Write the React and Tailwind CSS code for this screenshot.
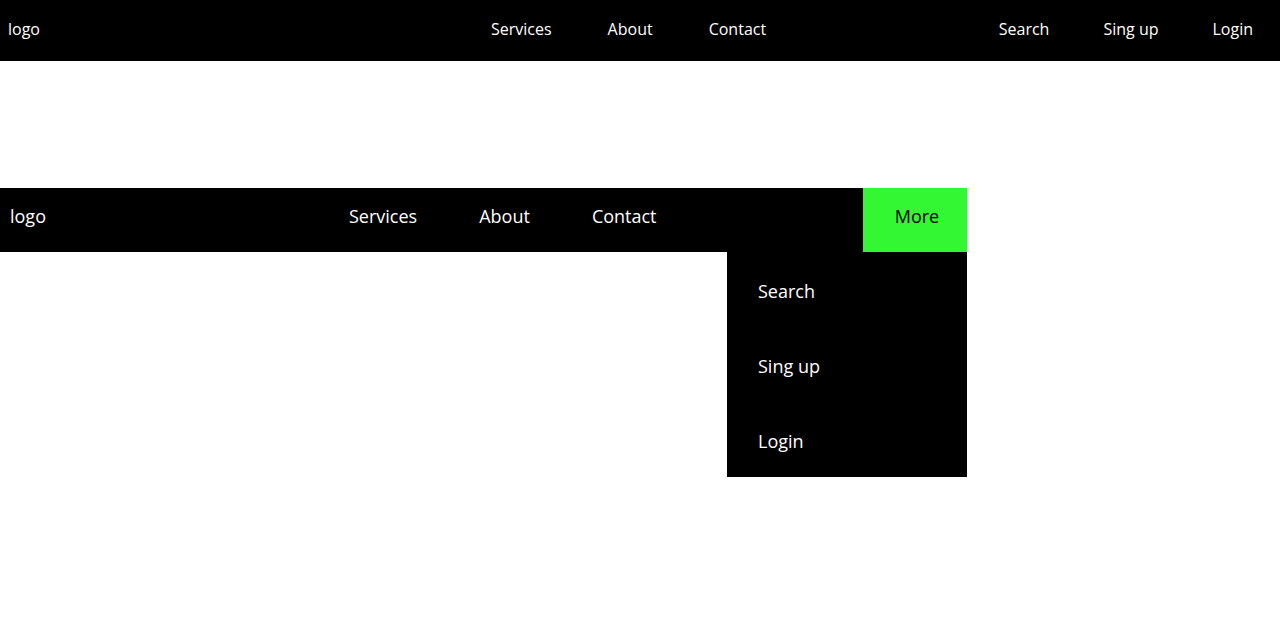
const topLinks = ['Services', 'About', 'Contact'];
const userLinks = ['Search', 'Sing up', 'Login'];

const App = () => {
  return (
    <div className="h-[640px] w-[1280px] bg-white font-['Open_Sans',sans-serif]">
      {/* wide navbar */}
      <header className="flex h-[61px] items-center bg-black pb-[4px] text-[16px] text-white">
        <a className="w-[463px] pl-2">logo</a>
        <nav className="flex">
          {topLinks.map(link => (
            <a key={link} className="px-[28px]">{link}</a>
          ))}
        </nav>
        <nav className="ml-auto flex">
          {userLinks.map(link => (
            <a key={link} className="px-[27px]">{link}</a>
          ))}
        </nav>
      </header>

      {/* collapsed navbar with dropdown */}
      <div className="relative mt-[127px] w-[967px]">
        <div className="flex h-16 items-center bg-black text-[18px] text-white">
          <a className="w-[318px] pb-2 pl-[10px]">logo</a>
          <nav className="flex pb-2">
            {topLinks.map(link => (
              <a key={link} className="px-[31px]">{link}</a>
            ))}
          </nav>
          <button className="ml-auto flex h-full w-[104px] items-center justify-center bg-[#33f733] pb-2 pl-1 text-black">
            More
          </button>
        </div>
        <ul className="absolute right-0 top-full w-[240px] bg-black text-[18px] text-white">
          {userLinks.map(link => (
            <li key={link} className="flex h-[75px] items-center pl-[31px] pt-[3px]">{link}</li>
          ))}
        </ul>
      </div>
    </div>
  );
};

export default App;
